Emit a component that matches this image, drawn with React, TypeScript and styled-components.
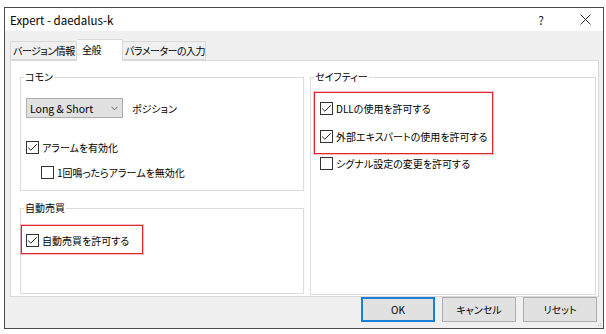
import React from 'react';
import styled, { createGlobalStyle } from 'styled-components';

const Global = createGlobalStyle`
  html, body { margin: 0; padding: 0; background: #fff; }
  body {
    font-family: "Noto Sans CJK JP", "Noto Sans", sans-serif;
    font-size: 10px;
    color: #000;
    font-feature-settings: "palt";
  }
`;

const Page = styled.div`
  padding: 7px 0 0 4px;
`;

const Window = styled.div`
  position: relative;
  width: 600px;
  height: 322px;
  box-sizing: border-box;
  border: 1px solid #4b4b4b;
  background: #f0f0f0;
  display: flex;
  flex-direction: column;
`;

const TitleBar = styled.div`
  height: 23px;
  background: #fff;
  display: flex;
  align-items: center;
  padding-left: 5px;
  font-size: 11.5px;
`;

const TitleText = styled.span`
  flex: 1;
  line-height: 23px;
  padding-top: 1px;
`;

const TitleButton = styled.div<{ $w: number }>`
  width: ${(p) => p.$w}px;
  height: 23px;
  display: flex;
  align-items: center;
  justify-content: center;
  color: #222;
  font-size: 12px;
`;

const TabStrip = styled.div`
  height: 29px;
  box-sizing: border-box;
  display: flex;
  align-items: flex-end;
  padding-left: 5px;
  position: relative;
  z-index: 1;
`;

const Tab = styled.div<{ $w: number; $active?: boolean }>`
  width: ${(p) => p.$w}px;
  height: ${(p) => (p.$active ? 22 : 19)}px;
  margin-bottom: ${(p) => (p.$active ? -1 : 0)}px;
  box-sizing: border-box;
  border: 1px solid #d9d9d9;
  border-bottom: ${(p) => (p.$active ? 'none' : '1px solid #d9d9d9')};
  background: ${(p) => (p.$active ? '#fff' : '#f0f0f0')};
  display: flex;
  align-items: ${(p) => (p.$active ? 'flex-start' : 'center')};
  padding-top: ${(p) => (p.$active ? 2 : 0)}px;
  padding-left: ${(p) => (p.$active ? 5 : 2)}px;
  font-size: 10px;
  letter-spacing: -0.5px;
  line-height: 16px;
  white-space: nowrap;
  overflow: hidden;
  & + & {
    border-left: none;
  }
`;

const Panel = styled.div`
  height: 237px;
  margin: 0 4px 0 5px;
  box-sizing: border-box;
  border: 1px solid #d9d9d9;
  background: #fff;
  display: grid;
  grid-template-columns: 284px 286px;
  column-gap: 6px;
  padding: 16px 2px 0 9px;
  align-items: start;
`;

const Column = styled.div`
  display: flex;
  flex-direction: column;
  gap: 17px;
`;

const Group = styled.div<{ $h: number; $pt: number; $pl: number }>`
  position: relative;
  height: ${(p) => p.$h}px;
  box-sizing: border-box;
  border: 1px solid #dcdcdc;
  padding: ${(p) => p.$pt}px 0 0 ${(p) => p.$pl}px;
  display: flex;
  flex-direction: column;
  align-items: flex-start;
`;

const Legend = styled.span`
  position: absolute;
  top: -8px;
  left: 3px;
  padding: 0 1px;
  background: #fff;
  line-height: 14px;
  font-size: 10px;
`;

const SelectRow = styled.div`
  display: flex;
  align-items: center;
  gap: 9px;
  height: 20px;
`;

const Select = styled.div`
  width: 97px;
  height: 20px;
  box-sizing: border-box;
  border: 1px solid #adadad;
  background: #e1e1e1;
  display: flex;
  align-items: center;
  justify-content: space-between;
  padding: 0 4px 0 3px;
  font-size: 10.5px;
`;

const CheckRow = styled.label<{ $mt?: number; $ml?: number }>`
  display: flex;
  align-items: center;
  gap: 3px;
  height: 13px;
  margin-top: ${(p) => p.$mt ?? 0}px;
  margin-left: ${(p) => p.$ml ?? 0}px;
  white-space: nowrap;
  line-height: 13px;
`;

const Box = styled.span`
  width: 13px;
  height: 13px;
  box-sizing: border-box;
  border: 1px solid #333;
  background: #fff;
  display: flex;
  align-items: center;
  justify-content: center;
  flex: none;
`;

const Highlight = styled.div<{ $w: number; $h: number; $pt: number; $pl: number; $gap?: number }>`
  width: ${(p) => p.$w}px;
  height: ${(p) => p.$h}px;
  box-sizing: border-box;
  border: 1px solid #e3262e;
  box-shadow: 0 0 0 1px rgba(236, 110, 116, 0.45);
  padding: ${(p) => p.$pt}px 0 0 ${(p) => p.$pl}px;
  display: flex;
  flex-direction: column;
  gap: ${(p) => p.$gap ?? 0}px;
`;

const Footer = styled.div`
  display: flex;
  justify-content: flex-end;
  gap: 7px;
  padding-right: 6px;
`;

const Button = styled.div<{ $default?: boolean }>`
  width: 74px;
  height: 25px;
  box-sizing: border-box;
  border: ${(p) => (p.$default ? '2px solid #1a7fd6' : '1px solid #adadad')};
  background: #e1e1e1;
  display: flex;
  align-items: center;
  justify-content: center;
  font-size: 10px;
`;

const Grip = styled.svg`
  position: absolute;
  right: 1px;
  bottom: 1px;
`;

const Check: React.FC<{ checked?: boolean; label: string; mt?: number; ml?: number }> = ({
  checked,
  label,
  mt,
  ml,
}) => (
  <CheckRow $mt={mt} $ml={ml}>
    <Box>
      {checked && (
        <svg width="11" height="11" viewBox="0 0 11 11">
          <polyline points="1.2,5.6 3.8,8.2 9.8,2.2" fill="none" stroke="#262626" strokeWidth="1" />
        </svg>
      )}
    </Box>
    <span>{label}</span>
  </CheckRow>
);

export default function App() {
  return (
    <>
      <Global />
      <Page>
        <Window>
          <TitleBar>
            <TitleText>Expert - daedalus-k</TitleText>
            <TitleButton $w={52}>?</TitleButton>
            <TitleButton $w={36}>
              <svg width="11" height="11" viewBox="0 0 11 11">
                <path d="M0.5 0.5 L10.5 10.5 M10.5 0.5 L0.5 10.5" stroke="#333" strokeWidth="1" />
              </svg>
            </TitleButton>
          </TitleBar>
          <TabStrip>
            <Tab $w={67}>バージョン情報</Tab>
            <Tab $w={46} $active>
              全般
            </Tab>
            <Tab $w={83}>パラメーターの入力</Tab>
          </TabStrip>
          <Panel>
            <Column>
              <Group $h={114} $pt={20} $pl={5}>
                <Legend>コモン</Legend>
                <SelectRow>
                  <Select>
                    <span>Long &amp; Short</span>
                    <svg width="7" height="5" viewBox="0 0 7 5">
                      <polyline points="0.5,0.8 3.5,3.8 6.5,0.8" fill="none" stroke="#666" strokeWidth="1" />
                    </svg>
                  </Select>
                  <span>ポジション</span>
                </SelectRow>
                <Check checked label="アラームを有効化" mt={23} />
                <Check label="1回鳴ったらアラームを無効化" mt={12} ml={15} />
              </Group>
              <Group $h={86} $pt={16} $pl={0}>
                <Legend>自動売買</Legend>
                <Highlight $w={122} $h={29} $pt={8} $pl={4}>
                  <Check checked label="自動売買を許可する" />
                </Highlight>
              </Group>
            </Column>
            <Group $h={218} $pt={14} $pl={3}>
              <Legend>セイフティー</Legend>
              <Highlight $w={179} $h={62} $pt={9} $pl={5} $gap={15}>
                <Check checked label="DLLの使用を許可する" />
                <Check checked label="外部エキスパートの使用を許可する" />
              </Highlight>
              <Check label="シグナル設定の変更を許可する" mt={3} ml={6} />
            </Group>
          </Panel>
          <Footer>
            <Button $default>OK</Button>
            <Button>キャンセル</Button>
            <Button>リセット</Button>
          </Footer>
          <Grip width="4" height="4" viewBox="0 0 4 4">
            <rect x="2" y="0" width="1" height="1" fill="#bbb" />
            <rect x="0" y="2" width="1" height="1" fill="#bbb" />
            <rect x="2" y="2" width="1" height="1" fill="#bbb" />
          </Grip>
        </Window>
      </Page>
    </>
  );
}
